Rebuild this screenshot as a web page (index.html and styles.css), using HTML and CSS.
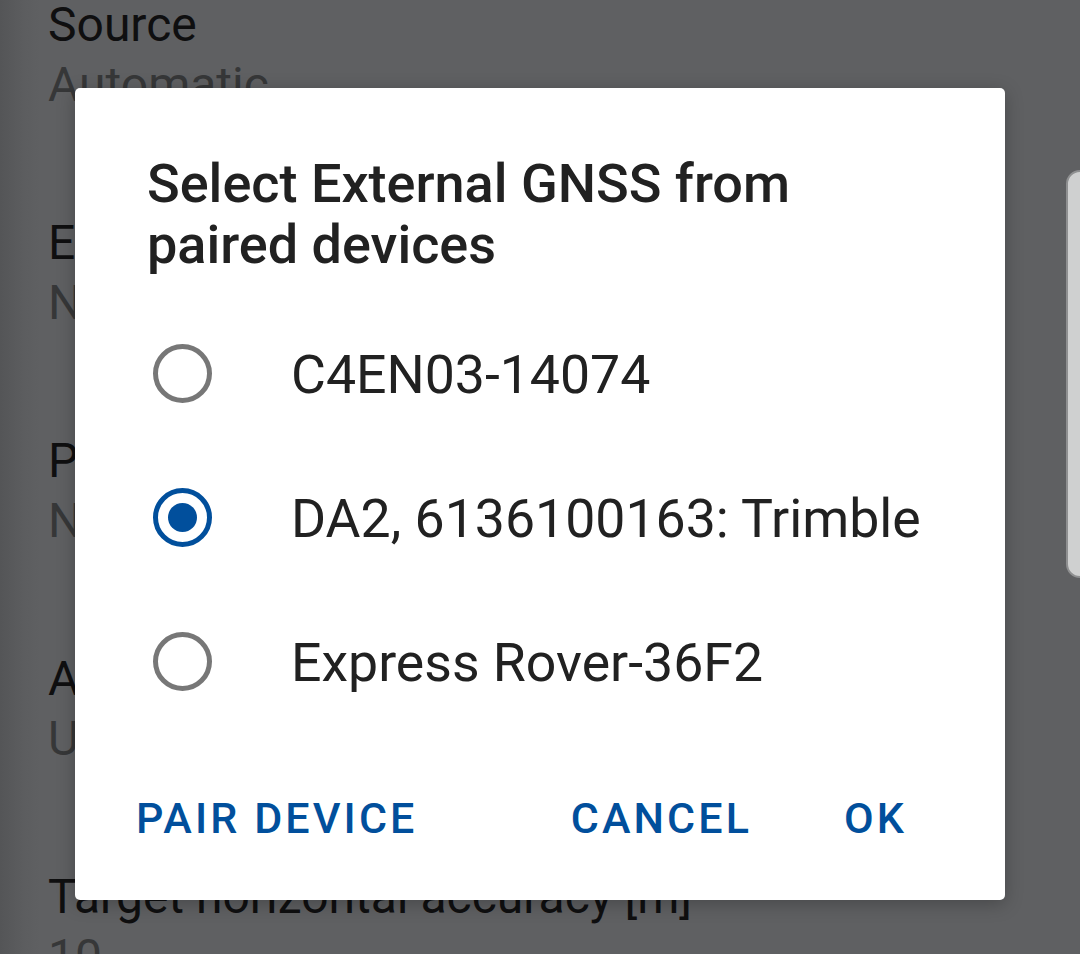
FILE: index.html
```html
<!DOCTYPE html>
<html>
<head>
<meta charset="utf-8">
<link rel="stylesheet" href="styles.css">
</head>
<body>
<div class="screen">
  <div class="settings">
    <div class="pref"><div class="pref-title">Source</div><div class="pref-sub">Automatic</div></div>
    <div class="pref"><div class="pref-title">External GNSS</div><div class="pref-sub">None</div></div>
    <div class="pref"><div class="pref-title">Profile</div><div class="pref-sub">None</div></div>
    <div class="pref"><div class="pref-title">Antenna height</div><div class="pref-sub">Unknown</div></div>
    <div class="pref"><div class="pref-title">Target horizontal accuracy [m]</div><div class="pref-sub">10</div></div>
  </div>
  <div class="side-handle"></div>
  <div class="dialog">
    <div class="dialog-title">Select External GNSS from paired devices</div>
    <div class="options">
      <div class="option"><span class="radio"></span><span class="option-label">C4EN03-14074</span></div>
      <div class="option"><span class="radio checked"></span><span class="option-label">DA2, 6136100163: Trimble</span></div>
      <div class="option"><span class="radio"></span><span class="option-label">Express Rover-36F2</span></div>
    </div>
    <div class="actions">
      <span class="btn">PAIR DEVICE</span>
      <div class="actions-right">
        <span class="btn">CANCEL</span>
        <span class="btn">OK</span>
      </div>
    </div>
  </div>
</div>
</body>
</html>
```

FILE: styles.css
```css
html, body {
  margin: 0;
  padding: 0;
}
body {
  width: 1080px;
  height: 954px;
  overflow: hidden;
  background: #5f6062;
  font-family: Roboto, "Noto Sans", sans-serif;
}
.screen {
  position: relative;
  width: 1080px;
  height: 954px;
  overflow: hidden;
  background: linear-gradient(to right, #545557 0px, #5c5d5f 24px, #5f6062 40px, #5f6062 100%);
}
.settings {
  padding-left: 48px;
  margin-top: -5px;
}
.pref {
  height: 218px;
}
.pref-title {
  font-size: 48px;
  line-height: 60px;
  color: #0f0f10;
  white-space: nowrap;
}
.pref-sub {
  font-size: 48px;
  line-height: 60px;
  color: #363738;
  white-space: nowrap;
}
.side-handle {
  position: absolute;
  left: 1066px;
  top: 170px;
  width: 40px;
  height: 404px;
  background: #cfd0d0;
  border: 2px solid #8f9091;
  border-radius: 14px;
}
.dialog {
  position: absolute;
  left: 75px;
  top: 88px;
  width: 930px;
  height: 812px;
  box-sizing: border-box;
  background: #ffffff;
  border-radius: 5px;
  box-shadow: 0 4px 18px rgba(0, 0, 0, 0.25);
  padding: 65px 0 0 0;
  display: flex;
  flex-direction: column;
}
.dialog-title {
  padding: 0 130px 0 72px;
  font-size: 54px;
  line-height: 61px;
  font-weight: 500;
  color: #212121;
}
.options {
  margin-top: 26px;
  display: flex;
  flex-direction: column;
}
.option {
  height: 144px;
  display: flex;
  align-items: center;
  padding-left: 78px;
}
.radio {
  width: 59px;
  height: 59px;
  box-sizing: border-box;
  border: 5.5px solid #777777;
  border-radius: 50%;
  display: flex;
  align-items: center;
  justify-content: center;
  flex: none;
}
.radio.checked {
  border-color: #014f9c;
}
.radio.checked::after {
  content: "";
  width: 29px;
  height: 29px;
  border-radius: 50%;
  background: #014f9c;
}
.option-label {
  margin-left: 79px;
  font-size: 53.6px;
  line-height: 144px;
  color: #212121;
  position: relative;
  top: 2px;
  white-space: nowrap;
}
.actions {
  margin-top: 55px;
  display: flex;
  justify-content: space-between;
  padding: 0 98px 0 61px;
}
.actions-right {
  display: flex;
  gap: 92px;
}
.btn {
  font-size: 43px;
  line-height: 60px;
  font-weight: 500;
  letter-spacing: 3.1px;
  color: #014f9c;
  white-space: nowrap;
}
```
